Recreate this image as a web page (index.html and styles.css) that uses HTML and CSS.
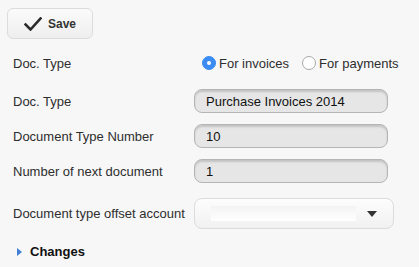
FILE: index.html
```html
<!DOCTYPE html>
<html lang="en">
<head>
    <meta charset="UTF-8">
    <title>Document type</title>
    <link rel="stylesheet" href="styles.css">
</head>
<body>
    <div class="toolbar">
        <button class="save-btn" type="button">
            <svg class="save-icon" width="18" height="14" viewBox="0 0 18 14">
                <path d="M1.5 7.5 L6.5 12.5 L16.5 1.5" fill="none" stroke="#2b2b2b" stroke-width="2.6" stroke-linecap="square" stroke-linejoin="miter"/>
            </svg>
            <span>Save</span>
        </button>
    </div>

    <div class="form">
        <div class="form-row row-radio">
            <div class="label">Doc. Type</div>
            <div class="radios">
                <label class="radio-item"><span class="radio checked"></span>For invoices</label>
                <label class="radio-item"><span class="radio"></span>For payments</label>
            </div>
        </div>
        <div class="form-row row-first">
            <div class="label">Doc. Type</div>
            <div class="field">Purchase Invoices 2014</div>
        </div>
        <div class="form-row">
            <div class="label">Document Type Number</div>
            <div class="field">10</div>
        </div>
        <div class="form-row">
            <div class="label">Number of next document</div>
            <div class="field">1</div>
        </div>
        <div class="form-row row-select">
            <div class="label">Document type offset account</div>
            <div class="select">
                <span class="select-value"></span>
                <span class="select-arrow"></span>
            </div>
        </div>
        <div class="changes">
            <span class="changes-arrow"></span>Changes
        </div>
    </div>
</body>
</html>
```

FILE: styles.css
```css
* {
    margin: 0;
    padding: 0;
    box-sizing: border-box;
}

body {
    background: #f7f7f7;
    font-family: "Liberation Sans", Arial, sans-serif;
    font-size: 13px;
    color: #2e2e2e;
    padding: 8px 0 0 0;
}

.toolbar {
    padding-left: 7px;
}

.save-btn {
    width: 86px;
    height: 31px;
    display: flex;
    align-items: center;
    padding-left: 16px;
    border: 1px solid #dcdcdc;
    border-radius: 6px;
    background: linear-gradient(#fbfbfb, #eeeeee);
    font-family: "Liberation Sans", Arial, sans-serif;
    font-size: 12px;
    font-weight: bold;
    color: #333;
}

.save-icon {
    margin-right: 6px;
}

.form {
    padding-left: 13px;
}

.form-row {
    display: flex;
    align-items: center;
    height: 24px;
    margin-top: 11px;
}

.row-radio {
    margin-top: 12px;
}

.row-first {
    margin-top: 14px;
}

.row-select {
    height: 31px;
    margin-top: 15px;
}

.label {
    width: 181px;
    flex-shrink: 0;
}

.radios {
    display: flex;
    padding-left: 8px;
}

.radio-item {
    display: flex;
    align-items: center;
    margin-right: 13px;
}

.radio {
    width: 14px;
    height: 14px;
    border-radius: 50%;
    border: 1px solid #a9a9a9;
    background: #fff;
    margin-right: 3px;
    position: relative;
}

.radio.checked {
    border-color: #3a8cf2;
    background: #3a8cf2;
}

.radio.checked::after {
    content: "";
    position: absolute;
    left: 4px;
    top: 4px;
    width: 4px;
    height: 4px;
    border-radius: 50%;
    background: #fff;
}

.field {
    width: 194px;
    height: 24px;
    border: 1px solid #b5b5b5;
    border-radius: 8px;
    background: #e6e6e6;
    box-shadow: inset 0 2px 2px rgba(0,0,0,0.15);
    padding: 4px 0 0 11px;
    color: #111;
}

.select {
    width: 200px;
    height: 31px;
    border: 1px solid #dcdcdc;
    border-radius: 8px;
    background: linear-gradient(#fdfdfd, #f1f1f1);
    display: flex;
    align-items: center;
    padding-left: 16px;
}

.select-value {
    width: 145px;
    height: 15px;
    background: linear-gradient(#f3f3f3, #ffffff);
}

.select-arrow {
    margin-left: 11px;
    width: 0;
    height: 0;
    border-left: 5px solid transparent;
    border-right: 5px solid transparent;
    border-top: 6px solid #333;
}

.changes {
    display: flex;
    align-items: center;
    margin-top: 15px;
    padding-left: 4px;
    font-weight: bold;
    color: #111;
}

.changes-arrow {
    width: 0;
    height: 0;
    border-top: 4px solid transparent;
    border-bottom: 4px solid transparent;
    border-left: 5px solid #3f7fd6;
    margin-right: 8px;
}
```
